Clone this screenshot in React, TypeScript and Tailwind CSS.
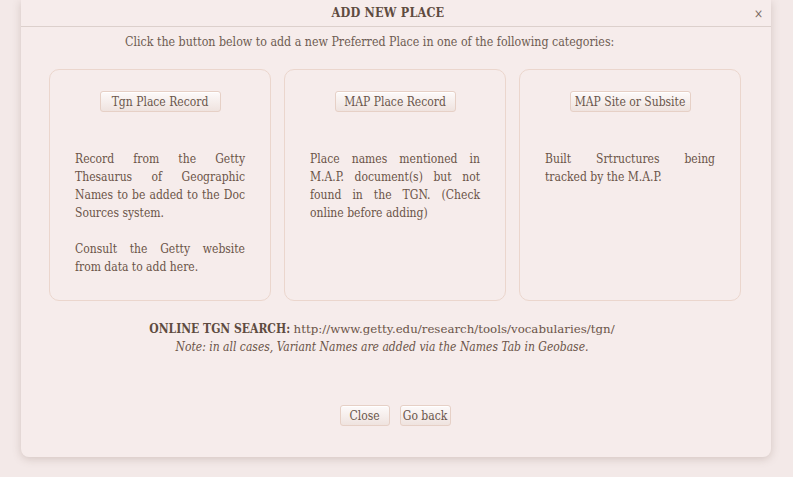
import React from 'react';

const serif = "font-['DejaVu_Serif_Condensed','DejaVu_Serif',serif]";

const places = [
  {
    label: 'Tgn Place Record',
    text: ['Record from the Getty Thesaurus of Geographic Names to be added to the Doc Sources system.', 'Consult the Getty website from data to add here.'],
  },
  {
    label: 'MAP Place Record',
    text: ['Place names mentioned in M.A.P. document(s) but not found in the TGN. (Check online before adding)'],
  },
  {
    label: 'MAP Site or Subsite',
    text: ['Built Srtructures being tracked by the M.A.P.'],
  },
];

const SmallButton: React.FC<{ children: React.ReactNode; className?: string }> = ({ children, className = '' }) => (
  <button
    type="button"
    className={`h-[21px] whitespace-nowrap rounded-[3px] border border-[#e6d0c6] bg-gradient-to-b from-[#fdfafa] to-[#efe3df] px-0 text-[12px] leading-none text-[#6a564b] shadow-[inset_0_1px_0_#fff] ${className}`}
  >
    {children}
  </button>
);

export default function App() {
  return (
    <div className={`h-[477px] w-[793px] overflow-hidden bg-[#f3e9e8] ${serif}`}>
      <div className="ml-[21px] h-[457px] w-[750px] rounded-b-[8px] bg-[#f6eceb] shadow-[0_2px_8px_rgba(120,90,80,0.25)]">
        {/* header */}
        <div className="relative flex h-[27px] items-center justify-center border-b border-[#dcd0cc] pr-[16px]">
          <h2 className="text-[12.5px] font-bold tracking-[0.2px] text-[#5e4b40]">ADD NEW PLACE</h2>
          <span className="absolute right-[8px] top-[5px] text-[12px] text-[#7a6a62]">×</span>
        </div>

        <p className="mt-[8px] pl-[104px] text-[12.3px] leading-[15px] text-[#6e5c52]">
          Click the button below to add a new Preferred Place in one of the following categories:
        </p>

        <div className="mt-[19px] flex gap-[13px] pl-[28px]">
          {places.map((p) => (
            <div key={p.label} className="h-[232px] w-[222px] rounded-[10px] border border-[#ebd6cd] px-[25px] pt-[21px]">
              <div className="flex justify-center">
                <SmallButton className="w-[121px]">{p.label}</SmallButton>
              </div>
              <div className="mt-[38px] space-y-[18px]">
                {p.text.map((t, i) => (
                  <p key={i} className="text-justify text-[12px] leading-[18px] text-[#6b5448]">
                    {t}
                  </p>
                ))}
              </div>
            </div>
          ))}
        </div>

        <div className="mt-[19px] pr-[28px] text-center text-[12px] leading-[18px] text-[#6b5448]">
          <p>
            <span className="font-bold text-[#5e4b40]">ONLINE TGN SEARCH:</span>{' '}
            <span className="font-['DejaVu_Serif',serif] text-[11.8px]">http://www.getty.edu/research/tools/vocabularies/tgn/</span>
          </p>
          <p className="italic">Note: in all cases, Variant Names are added via the Names Tab in Geobase.</p>
        </div>

        <div className="mt-[49px] flex justify-center gap-[10px] pr-[2px]">
          <SmallButton className="w-[50px]">Close</SmallButton>
          <SmallButton className="w-[51px]">Go back</SmallButton>
        </div>
      </div>
    </div>
  );
}
